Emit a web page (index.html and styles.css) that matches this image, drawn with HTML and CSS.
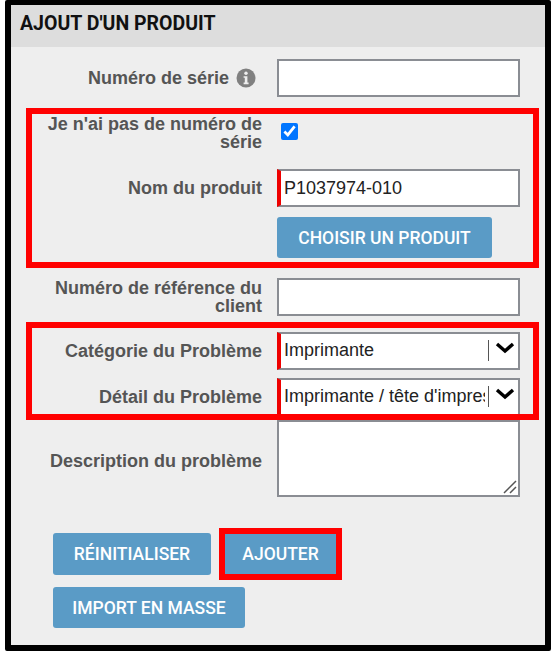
FILE: index.html
```html
<!DOCTYPE html>
<html lang="fr">
<head>
    <meta charset="UTF-8">
    <title>Ajout d'un produit</title>
    <link rel="stylesheet" href="styles.css">
</head>
<body>
    <div class="panel">
        <div class="panel-title">AJOUT D'UN PRODUIT</div>
        <form class="panel-body">
            <div class="row row-serial">
                <label class="label">Numéro de série
                    <svg class="info" viewBox="0 0 20 20" width="20" height="20">
                        <circle cx="10" cy="10" r="9.5" fill="#808080"/>
                        <circle cx="10" cy="5.2" r="1.7" fill="#eee"/>
                        <path d="M7.6 8.2h3.8v6.4h1.2v1.6H7.6v-1.6h1.2V9.8H7.6z" fill="#eee"/>
                    </svg>
                </label>
                <input class="field" type="text">
            </div>
            <div class="row row-noserial">
                <label class="label">Je n'ai pas de numéro de série</label>
                <div><input class="check" type="checkbox" checked></div>
            </div>
            <div class="row row-name">
                <label class="label">Nom du produit</label>
                <input class="field required" type="text" value="P1037974-010">
            </div>
            <div class="row row-choose">
                <span></span>
                <div><button class="btn btn-choose" type="button">CHOISIR UN PRODUIT</button></div>
            </div>
            <div class="row row-ref">
                <label class="label">Numéro de référence du client</label>
                <input class="field" type="text">
            </div>
            <div class="row row-cat">
                <label class="label">Catégorie du Problème</label>
                <div class="field required dropdown">
                    <div class="dropdown-text"><span>Imprimante</span></div>
                    <svg class="chevron" viewBox="0 0 20 12" width="20" height="12"><path d="M2 2l8 7 8-7" fill="none" stroke="#000" stroke-width="3.4"/></svg>
                </div>
            </div>
            <div class="row row-detail">
                <label class="label">Détail du Problème</label>
                <div class="field required dropdown">
                    <div class="dropdown-text"><span>Imprimante / tête d'impression</span></div>
                    <svg class="chevron" viewBox="0 0 20 12" width="20" height="12"><path d="M2 2l8 7 8-7" fill="none" stroke="#000" stroke-width="3.4"/></svg>
                </div>
            </div>
            <div class="row row-desc">
                <label class="label">Description du problème</label>
                <div class="area">
                    <svg class="grip" viewBox="0 0 14 14" width="14" height="14"><path d="M1 13L13 1M7 13l6-6" fill="none" stroke="#555" stroke-width="1.5"/></svg>
                </div>
            </div>
            <div class="actions">
                <button class="btn btn-reset" type="button">RÉINITIALISER</button>
                <button class="btn btn-add" type="button">AJOUTER</button>
            </div>
            <div class="actions actions-import">
                <button class="btn btn-import" type="button">IMPORT EN MASSE</button>
            </div>
        </form>
        <div class="mark mark-product"></div>
        <div class="mark mark-problem"></div>
    </div>
</body>
</html>
```

FILE: styles.css
```css
html, body {
    margin: 0;
    padding: 0;
    background: #fff;
}
.panel {
    position: relative;
    box-sizing: border-box;
    width: 546px;
    height: 651px;
    margin-left: 5px;
    background: #eee;
    border: 6px solid #000;
    border-top-width: 5px;
    border-radius: 2px;
}
.panel-title {
    height: 42px;
    padding-left: 9px;
    background: #ddd;
    color: #111;
    font-family: Roboto, sans-serif;
    font-size: 19.5px;
    font-weight: 700;
    line-height: 37px;
}
.panel-body {
    padding-top: 12px;
}
.row {
    display: grid;
    grid-template-columns: 251px 243px;
    column-gap: 15px;
    align-items: center;
}
.row-noserial {
    margin-top: 18px;
    align-items: start;
}
.row-name {
    margin-top: 18px;
}
.row-choose {
    margin-top: 10px;
}
.row-ref {
    margin-top: 20px;
}
.row-cat {
    margin-top: 16px;
}
.row-detail {
    margin-top: 8px;
}
.row-desc {
    margin-top: 4px;
}
.row-desc .label {
    padding-top: 4px;
}
.label {
    color: #555;
    font-family: "Liberation Sans", Arial, sans-serif;
    font-size: 18px;
    font-weight: bold;
    line-height: 18px;
    text-align: right;
}
.row-serial .label {
    display: flex;
    align-items: center;
    justify-content: flex-end;
    gap: 7px;
}
.info {
    margin-right: 6px;
}
.field {
    box-sizing: border-box;
    width: 243px;
    height: 38px;
    margin: 0;
    padding: 0 3px;
    background: #fff;
    border: 2px solid #8a8d93;
    border-radius: 0;
    color: #222;
    font-family: "Liberation Sans", Arial, sans-serif;
    font-size: 18px;
    outline: none;
}
.required {
    border-left: 4px solid #e00;
}
.check {
    display: block;
    width: 17px;
    height: 17px;
    margin: 8px 0 0 4px;
}
.dropdown {
    display: flex;
    align-items: center;
}
.dropdown-text {
    flex: 1;
    min-width: 0;
    height: 21px;
    margin-top: -1px;
    margin-right: 6px;
    padding-right: 3px;
    border-right: 1px solid #555;
    line-height: 21px;
}
.dropdown-text span {
    display: block;
    overflow: hidden;
    white-space: nowrap;
}
.chevron {
    flex: none;
    margin: -6px 0 0 0;
}
.area {
    position: relative;
    box-sizing: border-box;
    height: 77px;
    background: #fff;
    border: 2px solid #8a8d93;
}
.grip {
    position: absolute;
    right: 1px;
    bottom: 1px;
}
.btn {
    height: 42px;
    margin: 0;
    padding: 0;
    background: #5a9bc6;
    border: none;
    border-radius: 3px;
    color: #fff;
    font-family: Roboto, sans-serif;
    font-size: 17.5px;
    font-weight: 500;
}
.btn-choose {
    display: block;
    width: 215px;
    height: 41px;
}
.actions {
    display: flex;
    align-items: center;
    gap: 14px;
    margin-top: 36px;
    padding-left: 42px;
}
.actions-import {
    margin-top: 12px;
}
.btn-reset {
    width: 158px;
}
.btn-add {
    width: 111px;
    height: 40px;
    border-radius: 0;
    outline: 6px solid #f00;
}
.btn-import {
    width: 192px;
    height: 41px;
}
.mark {
    position: absolute;
    box-sizing: border-box;
    left: 15px;
    width: 513px;
    border: 6px solid #f00;
    pointer-events: none;
}
.mark-product {
    top: 103px;
    height: 160px;
}
.mark-problem {
    top: 317px;
    height: 98px;
}
```
